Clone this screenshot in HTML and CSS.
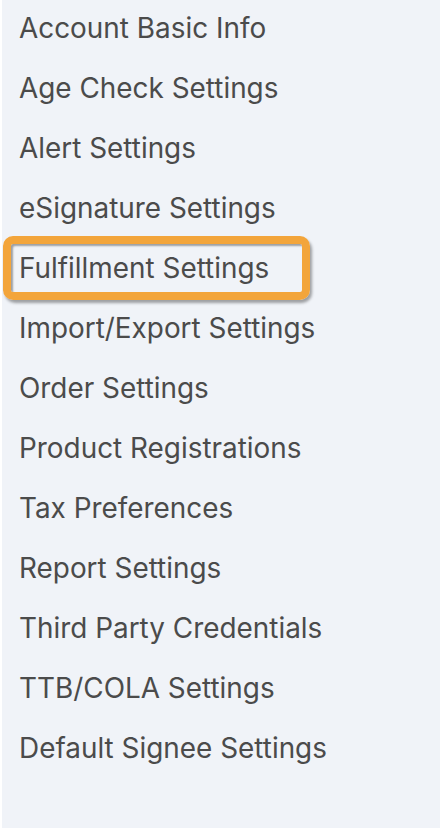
FILE: index.html
```html
<!DOCTYPE html>
<html>
<head>
<meta charset="utf-8">
<link rel="stylesheet" href="styles.css">
</head>
<body>
<nav class="menu">
  <div class="item">Account Basic Info</div>
  <div class="item">Age Check Settings</div>
  <div class="item">Alert Settings</div>
  <div class="item">eSignature Settings</div>
  <div class="item active">Fulfillment Settings</div>
  <div class="item">Import/Export Settings</div>
  <div class="item">Order Settings</div>
  <div class="item">Product Registrations</div>
  <div class="item">Tax Preferences</div>
  <div class="item">Report Settings</div>
  <div class="item">Third Party Credentials</div>
  <div class="item">TTB/COLA Settings</div>
  <div class="item">Default Signee Settings</div>
</nav>
</body>
</html>
```
FILE: styles.css
```css
html, body {
  margin: 0;
  padding: 0;
  background: #ffffff;
}
.menu {
  margin-left: 2px;
  height: 828px;
  background: #f0f3f8;
  display: flex;
  flex-direction: column;
  font-family: Inter, "Noto Sans", sans-serif;
}
.item {
  height: 60px;
  line-height: 56px;
  padding-left: 17px;
  font-size: 27.9px;
  color: #4b4b4b;
  box-sizing: border-box;
  white-space: nowrap;
  position: relative;
}
.active::before {
  content: "";
  position: absolute;
  left: 1px;
  top: -4px;
  width: 307px;
  height: 64px;
  box-sizing: border-box;
  border: 8px solid #f3a53b;
  border-radius: 10px;
  box-shadow: 2px 3px 3px rgba(0,0,0,0.35), inset 2px 2px 2px rgba(0,0,0,0.35);
}
```
